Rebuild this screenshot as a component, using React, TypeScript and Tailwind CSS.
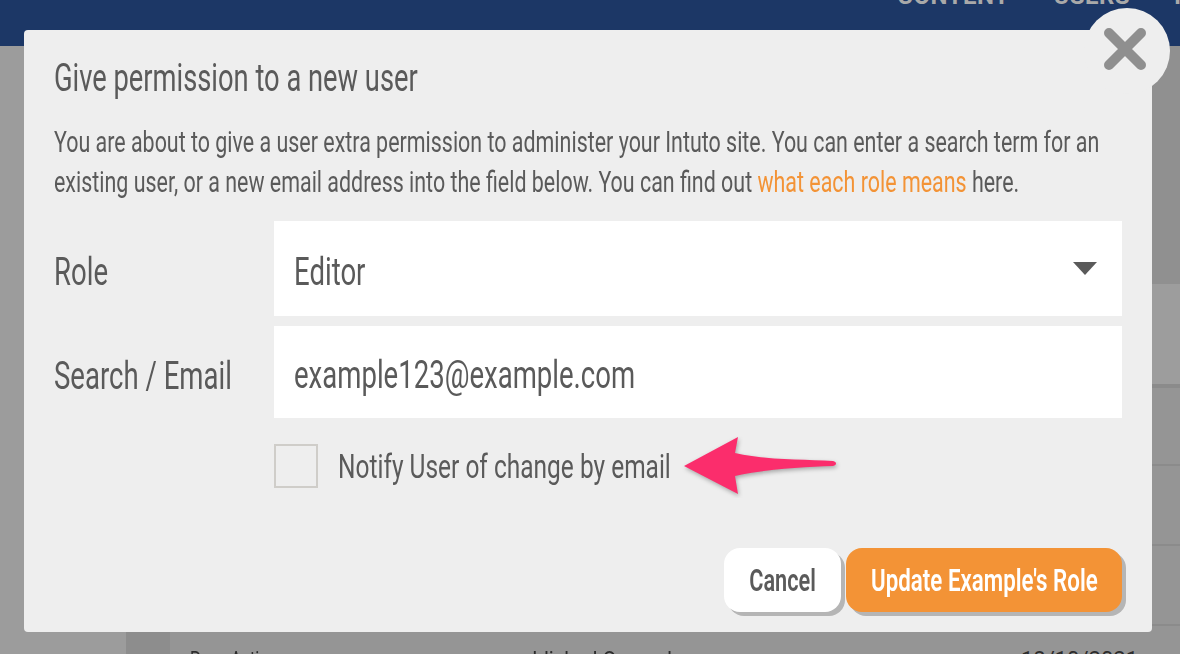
const font = "font-['Roboto',sans-serif]";

const sideRows = [
  "h-[104px] bg-[#9d9d9d] border-b-[4px]",
  "h-[78px] bg-[#959595] border-b-[2px]",
  "h-[80px] bg-[#959595] border-b-[2px]",
  "h-[80px] bg-[#959595] border-b-[2px]",
];

function Backdrop() {
  return (
    <div className="flex flex-col h-full">
      <header className="h-[46px] bg-[#1c3766] flex justify-end gap-[44px] -mr-[10px] overflow-hidden shrink-0">
        <span className={`${font} font-bold text-[24px] tracking-[0.5px] leading-none -mt-[16px] text-[#a9a9a9]`}>CONTENT</span>
        <span className={`${font} font-bold text-[24px] tracking-[0.5px] leading-none -mt-[16px] text-[#a9a9a9]`}>USERS</span>
        <span className={`${font} font-bold text-[24px] tracking-[0.5px] leading-none -mt-[16px] text-[#a9a9a9]`}>R</span>
      </header>
      <div className="flex-1 flex bg-[#9c9c9c]">
        <div className="w-[126px]" />
        <div className="w-[44px] bg-[#8d8d8d]" />
        <div className="flex-1 flex flex-col bg-[#959595]">
          <div className="h-[238px] shrink-0 bg-[#909090]" />
          {sideRows.map((row, i) => (
            <div key={i} className={`${row} shrink-0 border-[#8b8b8b]`} />
          ))}
          <div className={`${font} flex pl-[20px] pr-[42px] pt-[23px] text-[22px] leading-none text-[#2c2c2c]`}>
            <span className="w-[320px] whitespace-nowrap origin-left scale-x-[0.74]">Page Action</span>
            <span className="whitespace-nowrap origin-left scale-x-[0.92]">published Opened</span>
            <span className="ml-auto">18/10/2021</span>
          </div>
        </div>
      </div>
    </div>
  );
}

function Modal() {
  return (
    <div className={`${font} absolute left-[24px] top-[30px] w-[1128px] h-[602px] rounded-[4px] bg-[#eeeeee] text-[#5a5a5a] px-[30px]`}>
      {/* Close */}
      <div className="absolute -right-[18px] -top-[22px] w-[86px] h-[86px] rounded-full bg-[#eeeeee] flex items-center justify-center">
        <svg className="-translate-x-[2px] -translate-y-[2px]" width="42" height="42" viewBox="0 0 42 42" fill="none">
          <path d="M5 5 37 37M37 5 5 37" stroke="#8f8f8f" strokeWidth="10" strokeLinecap="round" />
        </svg>
      </div>

      <h2 className="text-[39px] leading-[40px] pt-[28px] h-[68px] font-normal whitespace-nowrap origin-left scale-x-[0.70]">
        Give permission to a new user
      </h2>
      <p className="text-[29px] leading-[40px] mt-[24px] h-[80px] whitespace-nowrap font-normal origin-left scale-x-[0.739]">
        You are about to give a user extra permission to administer your Intuto site. You can enter a search term for an<br />
        existing user, or a new email address into the field below. You can find out <span className="text-[#f39336]">what each role means</span> here.
      </p>

      <div className="flex flex-col gap-[10px] mt-[19px] text-[38px] font-normal">
        <div className="flex items-center">
          <label className="w-[220px] shrink-0 pt-[7px] whitespace-nowrap origin-left scale-x-[0.725]">Role</label>
          <div className="flex-1 h-[95px] bg-white flex items-center justify-between pl-[20px] pr-[25px]">
            <span className="pt-[7px] origin-left scale-x-[0.725]">Editor</span>
            <svg width="24" height="13" viewBox="0 0 24 13"><path d="M0 0H24L12 13Z" fill="#5a5a5a" /></svg>
          </div>
        </div>
        <div className="flex items-center">
          <label className="w-[220px] shrink-0 pt-[8px] whitespace-nowrap origin-left scale-x-[0.725]">Search / Email</label>
          <div className="flex-1 h-[92px] bg-white flex items-center pl-[20px] pt-[7px]">
            <span className="origin-left scale-x-[0.725]">example123@example.com</span>
          </div>
        </div>
      </div>

      <div className="relative flex items-center ml-[220px] mt-[21px] gap-[20px] text-[34px] font-normal">
        <div className="w-[44px] h-[44px] border-[2px] border-[#cfcdc9]" />
        <span className="pt-[2px] whitespace-nowrap origin-left scale-x-[0.72]">Notify User of change by email</span>
        <svg className="absolute left-[400px] -top-[3px]" width="170" height="62" viewBox="0 0 170 62">
          <path d="M10 30 64 1 61 17C90 24 130 23 159 25 163 26 163 29 159 30 130 31 90 33 61 40L64 58Z" fill="#fb2d6c" style={{ filter: "drop-shadow(1px 2px 2px rgba(0,0,0,.3))" }} />
        </svg>
      </div>

      <div className="flex justify-end gap-[5px] mt-[56px] text-[31px] font-semibold">
        <button className="w-[117px] h-[64px] pt-[3px] rounded-[16px] bg-white text-[#5a5a5a] shadow-[4px_4px_0_#b5b5b5]">
          <span className="inline-block whitespace-nowrap scale-x-[0.70]">Cancel</span>
        </button>
        <button className="w-[276px] h-[64px] pt-[3px] rounded-[16px] bg-[#f39336] text-white shadow-[4px_4px_0_#b5b5b5] flex items-center justify-center">
          <span className="inline-block whitespace-nowrap scale-x-[0.72]">Update Example's Role</span>
        </button>
      </div>
    </div>
  );
}

export default function App() {
  return (
    <div className="relative w-[1180px] h-[654px] overflow-hidden">
      <Backdrop />
      <Modal />
    </div>
  );
}
